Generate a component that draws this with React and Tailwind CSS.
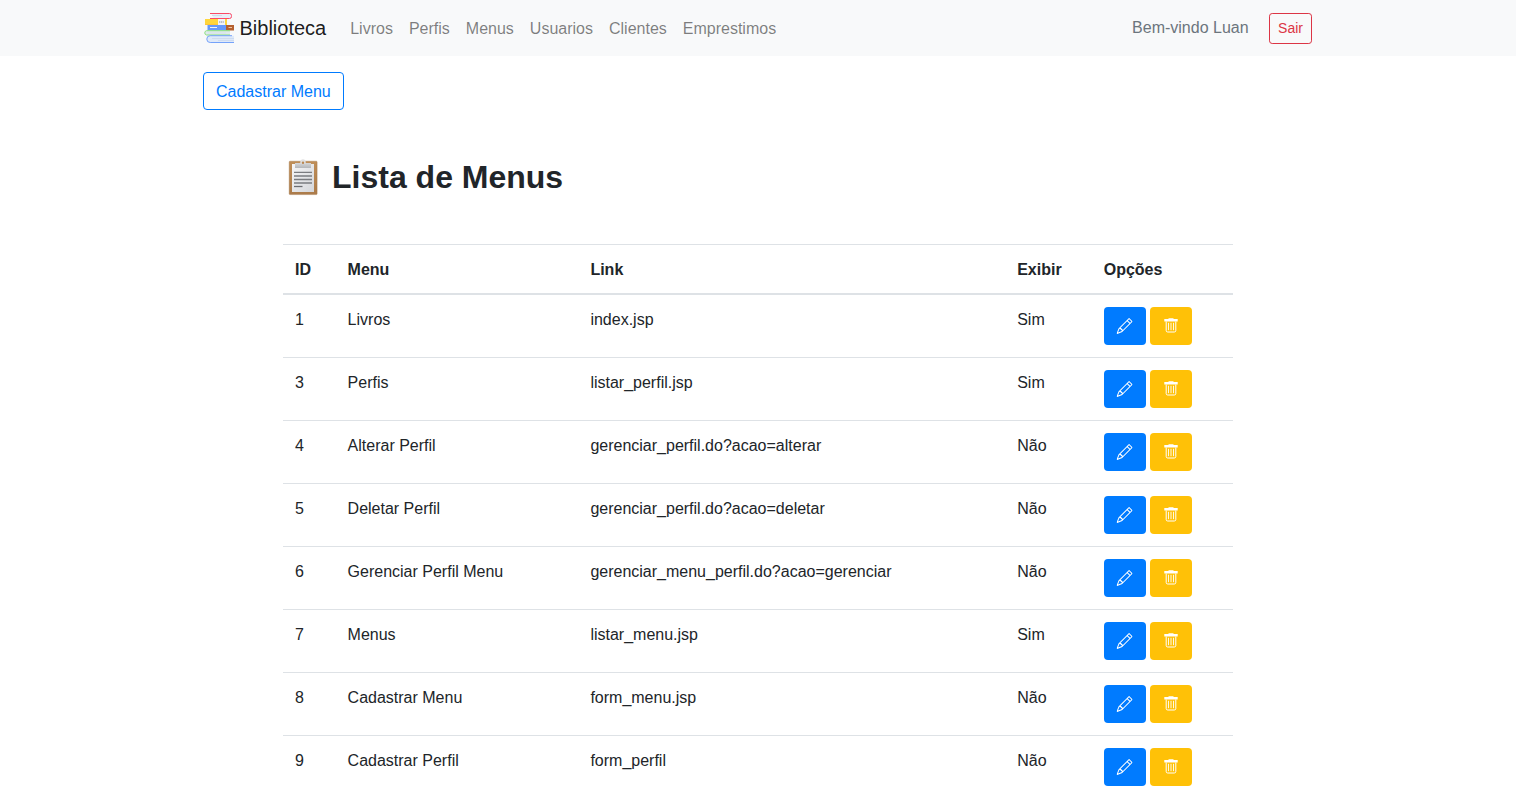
import { BsPencil } from "react-icons/bs";

const links = ["Livros", "Perfis", "Menus", "Usuarios", "Clientes", "Emprestimos"];

const menus = [
  [1, "Livros", "index.jsp", "Sim"],
  [3, "Perfis", "listar_perfil.jsp", "Sim"],
  [4, "Alterar Perfil", "gerenciar_perfil.do?acao=alterar", "Não"],
  [5, "Deletar Perfil", "gerenciar_perfil.do?acao=deletar", "Não"],
  [6, "Gerenciar Perfil Menu", "gerenciar_menu_perfil.do?acao=gerenciar", "Não"],
  [7, "Menus", "listar_menu.jsp", "Sim"],
  [8, "Cadastrar Menu", "form_menu.jsp", "Não"],
  [9, "Cadastrar Perfil", "form_perfil", "Não"],
];

function BooksLogo() {
  return (
    <svg width="30" height="30" viewBox="0 0 30 30" fill="none">
      <path d="M7 .5h18a2.500 2.500 0 0 1 0 5H10" fill="#e9eef8" />
      <path d="M6 .5h19.500a2 2 0 0 1 2 2v1a2 2 0 0 1-2 2H6" stroke="#fb4a66" />
      <path d="M8 2.500h10" stroke="#d3dcec" />
      <path d="M1 6h22v6H1z" fill="#ffd63c" />
      <path d="M1 11h13v1H1z" fill="#fdc43b" />
      <path d="M14 6h7v6h-7z" fill="#f3f4f7" />
      <path d="M15 9h5" stroke="#8a8c98" strokeWidth="1.200" strokeDasharray="1.200 .6" />
      <path d="M3.500 12H22v5.500H3.500z" fill="#6699fb" />
      <path d="M22 12h8v5.500h-8z" fill="#b5602f" />
      <path d="M6 14.500h7" stroke="#edf3ff" />
      <path d="M24.500 14.500H28" stroke="#efc3a4" />
      <path d="M26 17.700H2.500a2.200 2.200 0 0 0 0 4.300H26" fill="#dfe9ee" stroke="#8be07d" />
      <path d="M4 20h18" stroke="#d4e0ea" strokeWidth=".7" />
      <path d="M30 22.700H6a3.400 3.400 0 0 0 0 6.800h24z" fill="#dfe9f8" />
      <path d="M28 22.700H6.200a3.400 3.400 0 0 0 0 6.800H30" stroke="#74a2fa" />
      <path d="M8 25.500h22M14 27.500h16" stroke="#c6d6ee" strokeWidth=".7" />
    </svg>
  );
}

function ClipboardIcon() {
  return (
    <svg className="shrink-0" width="40" height="38" viewBox="0 0 40 38" fill="none">
      <defs>
        <linearGradient id="board" x1="0" y1="0" x2="0" y2="1">
          <stop stopColor="#bf8e58" />
          <stop offset="1" stopColor="#ab7b4a" />
        </linearGradient>
        <linearGradient id="paper" x1="0" y1="0" x2="1" y2="1">
          <stop stopColor="#f6f6f7" />
          <stop offset="1" stopColor="#d4d6da" />
        </linearGradient>
        <linearGradient id="clip" x1="0" y1="0" x2="0" y2="1">
          <stop stopColor="#d5d6d8" />
          <stop offset="1" stopColor="#b5b7ba" />
        </linearGradient>
      </defs>
      <rect x="6.200" y="3.200" width="27.900" height="33.400" rx=".8" fill="url(#board)" stroke="#9f7144" strokeWidth=".4" />
      <path d="M9 6h22v28H9z" fill="url(#paper)" />
      <path d="M12 5h16v5H12z" fill="url(#clip)" />
      <path d="M17.300 5.500V4c0-1.700 1-2.700 2.700-2.700s2.700 1 2.700 2.700v1.500z" fill="#e1e1e2" />
      <circle cx="20" cy="4.700" r="1.200" fill="#b98751" />
      <path d="M11 14.300h18M11 18h18M11 21.500h18M11 25h18" stroke="#7a7c80" strokeWidth="1.300" />
      <path d="M11 28.500h8.500" stroke="#6b6d71" strokeWidth="1.300" />
    </svg>
  );
}

function TrashIcon() {
  return (
    <svg width="16" height="16" viewBox="0 0 16 16" fill="none" stroke="currentColor">
      <path d="M1.300 1h4.200V.2h5V1h4.200v2.600H1.300z" fill="currentColor" stroke="none" />
      <path d="M3.200 3.500v9a1.500 1.500 0 0 0 1.500 1.500h6.600a1.500 1.500 0 0 0 1.500-1.500v-9" />
      <path d="M5.500 5.200v6.600M8 5.200v6.600M10.500 5.200v6.600" strokeLinecap="round" strokeWidth=".9" />
    </svg>
  );
}

export default function App() {
  return (
    <div className="h-[788px] overflow-hidden bg-white font-['Liberation_Sans',Arial,sans-serif] text-base text-[#212529]">
      <nav className="h-14 bg-[#f8f9fa]">
        <div className="mx-auto flex h-full w-[1140px] items-center px-[15px]">
          <a className="mr-4 flex items-center pl-px text-xl text-black/90">
            <BooksLogo />
            <span className="ml-[5.500px]">Biblioteca</span>
          </a>
          <ul className="flex pt-px">
            {links.map((link) => (
              <li key={link} className="px-2 text-black/50">{link}</li>
            ))}
          </ul>
          <span className="mr-[20.500px] ml-auto pb-px text-[#6c757d]">Bem-vindo Luan</span>
          <button className="mr-px h-[31px] rounded-[3.200px] border border-[#dc3545] px-2 text-sm leading-[21px] text-[#dc3545]">
            Sair
          </button>
        </div>
      </nav>

      <main className="mx-auto w-[1140px] px-[15px] pt-4">
        <button className="block h-[38px] rounded border border-[#007bff] px-3 pt-0.5 text-[#007bff]">
          Cadastrar Menu
        </button>
        <div className="mx-auto w-[950px] pt-12">
          <h1 className="flex h-[38px] text-[32px] leading-[38.400px] font-bold">
            <ClipboardIcon />
            <span className="ml-[9px]">Lista de Menus</span>
          </h1>
          <table className="mt-12 w-[950px] table-fixed border-collapse text-left">
            <colgroup>
              <col className="w-[52.600px]" />
              <col className="w-[242.800px]" />
              <col className="w-[426.800px]" />
              <col className="w-[86.500px]" />
              <col className="w-[141.300px]" />
            </colgroup>
            <thead>
              <tr className="border-t border-b-2 border-[#dee2e6]">
                {["ID", "Menu", "Link", "Exibir", "Opções"].map((title) => (
                  <th key={title} className="px-3 pt-[13px] pb-[11px] font-bold">{title}</th>
                ))}
              </tr>
            </thead>
            <tbody>
              {menus.map(([id, name, link, visible]) => (
                <tr key={id} className="border-t border-[#dee2e6] align-top">
                  <td className="px-3 pt-[13px]">{id}</td>
                  <td className="px-3 pt-[13px]">{name}</td>
                  <td className="px-3 pt-[13px]">{link}</td>
                  <td className="px-3 pt-[13px]">{visible}</td>
                  <td className="p-3">
                    <div className="flex gap-1 text-white">
                      <button aria-label="Editar" className="flex h-[38px] w-[42px] items-center justify-center rounded bg-[#007bff]">
                        <BsPencil size={16} className="-translate-x-[0.400px]" />
                      </button>
                      <button aria-label="Excluir" className="flex h-[38px] w-[42px] items-center justify-center rounded bg-[#ffc107]">
                        <TrashIcon />
                      </button>
                    </div>
                  </td>
                </tr>
              ))}
            </tbody>
          </table>
        </div>
      </main>
    </div>
  );
}
